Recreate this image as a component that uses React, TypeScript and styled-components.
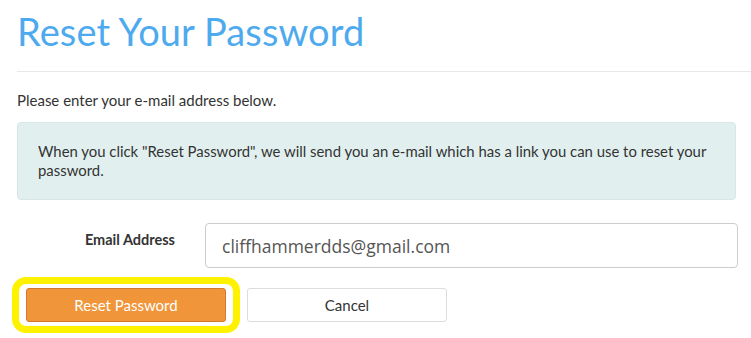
import React from "react";
import styled, { createGlobalStyle } from "styled-components";

const Global = createGlobalStyle`
  html, body { margin: 0; padding: 0; background: #fff; }
  body { font-family: Lato, "Noto Sans", sans-serif; color: #333; }
  * { box-sizing: border-box; }
`;

const Page = styled.div`
  width: 751px;
  padding: 0 13px 0 17px;
`;

const Title = styled.h1`
  margin: 9px 0 0 0;
  font-family: Lato, "Noto Sans", sans-serif;
  font-weight: 400;
  font-size: 38px;
  line-height: 44px;
  letter-spacing: 0.1px;
  color: #4eaaee;
`;

const Rule = styled.hr`
  margin: 18px -13px 0 0;
  border: 0;
  border-top: 1px solid #e8e8e8;
`;

const Intro = styled.p`
  margin: 18px 0 0;
  font-size: 15px;
  line-height: 20px;
  color: #333;
`;

const Notice = styled.div`
  margin-top: 12px;
  margin-right: 2px;
  padding: 19px 20px 19px 20px;
  background: #e1f0ef;
  border: 1px solid #d6e6e5;
  border-radius: 4px;
  font-size: 14.9px;
  line-height: 19px;
  color: #333;
`;

const FieldRow = styled.div`
  display: grid;
  grid-template-columns: 158px 1fr;
  column-gap: 30px;
  margin-top: 23px;
  align-items: start;
`;

const Label = styled.label`
  text-align: right;
  font-weight: 700;
  font-size: 14.5px;
  line-height: 20px;
  padding-top: 7px;
  color: #333;
`;

const Input = styled.input`
  height: 45px;
  width: 100%;
  padding: 0 16px;
  border: 1px solid #ccc;
  border-radius: 4px;
  font-family: "Open Sans", Lato, sans-serif;
  font-size: 17.5px;
  color: #555;
  outline: none;
`;

const Actions = styled.div`
  display: flex;
  align-items: center;
  gap: 7px;
  margin-top: 9px;
  margin-left: -5px;
`;

const Highlight = styled.div`
  border: 7px solid #fff200;
  border-radius: 14px;
  padding: 4px 7px;
  display: flex;
`;

const Button = styled.button<{ $primary?: boolean }>`
  width: 200px;
  height: 34px;
  border-radius: 3px;
  font-family: Lato, "Noto Sans", sans-serif;
  font-size: 15px;
  cursor: pointer;
  background: ${(p) => (p.$primary ? "#f0953a" : "#fff")};
  border: 1px solid ${(p) => (p.$primary ? "#d7792a" : "#dddddd")};
  color: ${(p) => (p.$primary ? "#fff" : "#333")};
`;

export default function App() {
  return (
    <>
      <Global />
      <Page>
        <Title>Reset Your Password</Title>
        <Rule />
        <Intro>Please enter your e-mail address below.</Intro>
        <Notice>
          When you click "Reset Password", we will send you an e-mail which has a link you can use to reset your password.
        </Notice>
        <FieldRow>
          <Label htmlFor="email">Email Address</Label>
          <Input id="email" defaultValue="cliffhammerdds@gmail.com" />
        </FieldRow>
        <Actions>
          <Highlight>
            <Button $primary>Reset Password</Button>
          </Highlight>
          <Button>Cancel</Button>
        </Actions>
      </Page>
    </>
  );
}
